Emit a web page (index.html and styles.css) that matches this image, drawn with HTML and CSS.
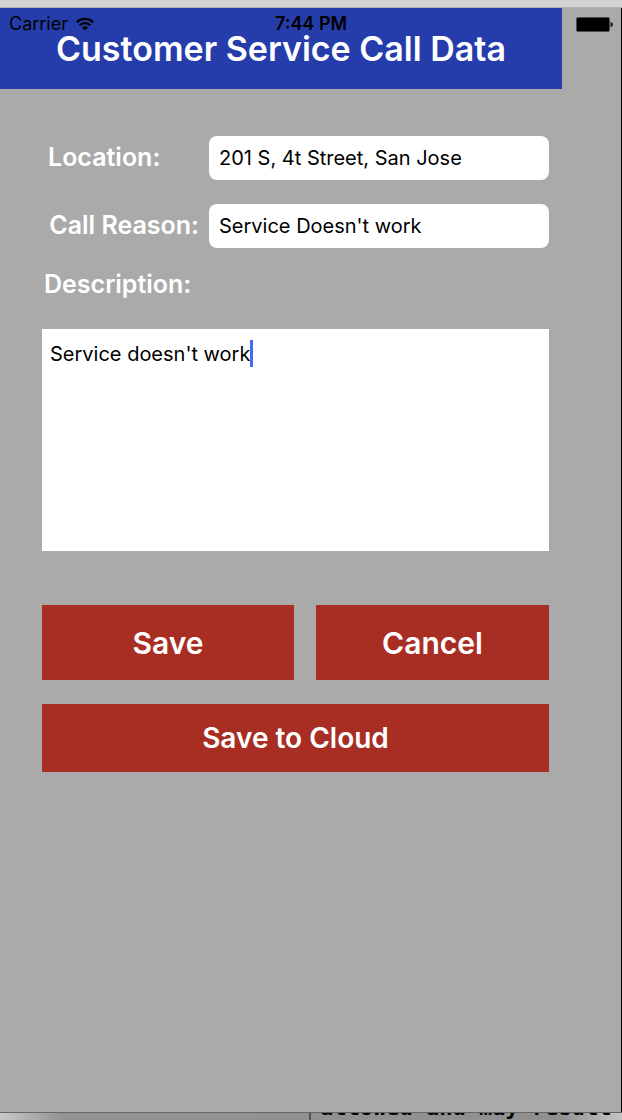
FILE: index.html
```html
<!DOCTYPE html>
<html lang="en">
<head>
<meta charset="utf-8">
<meta name="viewport" content="width=device-width, initial-scale=1">
<title>Customer Service Call Data</title>
<link rel="stylesheet" href="styles.css">
</head>
<body>
<div class="desktop">
  <div class="window-edge"></div>
  <main class="screen">
    <div class="status-bar">
      <div class="carrier">
        <span>Carrier</span>
        <svg class="wifi" viewBox="0 0 18 14" aria-hidden="true">
          <g fill="none" stroke="#000" stroke-width="2.2">
            <path d="M0.8 5.2A11.6 11.6 0 0 1 17.2 5.2"/>
            <path d="M3.6 8.3A7.6 7.6 0 0 1 14.4 8.3"/>
          </g>
          <path d="M9 13.6L6 10.6A4.2 4.2 0 0 1 12 10.6Z"/>
        </svg>
      </div>
      <time class="clock">7:44 PM</time>
      <svg class="battery" viewBox="0 0 37 15" aria-hidden="true">
        <rect x="0.5" y="0.5" width="33" height="14" rx="1.5" fill="#000" stroke="#4c4c4c"/>
        <path d="M34.5 5H35Q37 5.5 37 7.5T35 10H34.5Z" fill="#222"/>
      </svg>
    </div>
    <header class="title-bar"><h1 class="title">Customer Service Call Data</h1></header>
    <form class="call-form">
      <div class="field">
        <label class="label" for="location">Location:</label>
        <input class="text-field" id="location" type="text" value="201 S, 4t Street, San Jose">
      </div>
      <div class="field field-last">
        <label class="label label-end" for="reason">Call Reason:</label>
        <input class="text-field" id="reason" type="text" value="Service Doesn't work">
      </div>
      <label class="label label-block" for="description">Description:</label>
      <div class="notes">
        <textarea class="notes-input" id="description">Service doesn't work</textarea>
        <span class="caret"></span>
      </div>
      <div class="actions">
        <button class="button" type="button">Save</button>
        <button class="button" type="button">Cancel</button>
      </div>
      <button class="button button-wide" type="button">Save to Cloud</button>
    </form>
  </main>
  <div class="backdrop">
    <div class="backdrop-pane"></div>
    <p class="backdrop-text">allowed and may result</p>
  </div>
</div>
</body>
</html>
```

FILE: styles.css
```css
* {
  box-sizing: border-box;
}

body {
  margin: 0;
  font-family: Inter, "Liberation Sans", sans-serif;
  background: #aaa;
}

.desktop {
  display: flex;
  flex-direction: column;
  height: 100vh;
  overflow: hidden;
}

.window-edge {
  flex: none;
  height: 8px;
  background: #d4d2d5;
  border-bottom: 1px solid #b4b4b4;
}

.screen {
  position: relative;
  flex: 1;
  background: #aaa;
  border-right: 1px solid #000;
}

.status-bar {
  position: absolute;
  top: 6px;
  left: 9px;
  right: 8px;
  display: grid;
  grid-template-columns: 1fr auto 1fr;
  align-items: center;
  font-size: 18px;
  line-height: 20px;
  color: #000;
}

.carrier {
  display: flex;
  align-items: center;
  gap: 8px;
}

.wifi {
  width: 18px;
  height: 14px;
}

.clock {
  font-weight: 600;
}

.battery {
  justify-self: end;
  width: 37px;
  height: 15px;
}

.title-bar {
  height: 81px;
  margin-right: 59px;
  background: #243dab;
}

.title {
  margin: 0;
  padding-top: 20px;
  font-size: 34px;
  font-weight: 600;
  line-height: 42px;
  text-align: center;
  color: #fff;
}

.call-form {
  padding: 47px 72px 0 42px;
}

.field {
  display: grid;
  grid-template-columns: 157px 1fr;
  column-gap: 10px;
  align-items: center;
  margin-bottom: 24px;
}

.field-last {
  margin-bottom: 20px;
}

.label {
  padding-left: 6px;
  padding-bottom: 2px;
  font-size: 25px;
  font-weight: 600;
  line-height: 32px;
  white-space: nowrap;
  color: #fff;
}

.label-end {
  justify-self: end;
}

.label-block {
  display: block;
  padding-left: 2px;
}

.text-field {
  width: 100%;
  height: 44px;
  padding: 0 10px;
  border: 0;
  border-radius: 8px;
  font-family: inherit;
  font-size: 20px;
  color: #000;
  background: #fff;
}

.notes {
  position: relative;
  margin-top: 27px;
}

.notes-input {
  display: block;
  width: 100%;
  height: 222px;
  padding: 12px 8px;
  border: 0;
  font-family: inherit;
  font-size: 20px;
  line-height: 26px;
  color: #000;
  background: #fff;
  resize: none;
}

.caret {
  position: absolute;
  top: 11px;
  left: 208px;
  width: 3px;
  height: 27px;
  background: #426bf2;
}

.actions {
  display: grid;
  grid-template-columns: 252fr 233fr;
  gap: 22px;
  margin: 54px 0 24px;
}

.button {
  height: 75px;
  padding: 0;
  border: 0;
  font-family: inherit;
  font-size: 30px;
  font-weight: 600;
  color: #fff;
  background: #a82e23;
}

.button-wide {
  width: 100%;
  height: 68px;
  font-size: 28px;
}

.backdrop {
  flex: none;
  display: flex;
  align-items: flex-end;
  height: 8px;
  overflow: hidden;
  border-top: 1px solid #666;
  background: linear-gradient(90deg, #c8c8c8, #939393 10%, #909090 90%, #c4c4c4);
}

.backdrop-pane {
  width: 50%;
  align-self: stretch;
  border-right: 2px solid #555;
}

.backdrop-text {
  width: 50%;
  margin: 0;
  padding-left: 9px;
  font: bold 22px/24px "DejaVu Sans Mono", monospace;
  white-space: nowrap;
  color: #000;
}
```
